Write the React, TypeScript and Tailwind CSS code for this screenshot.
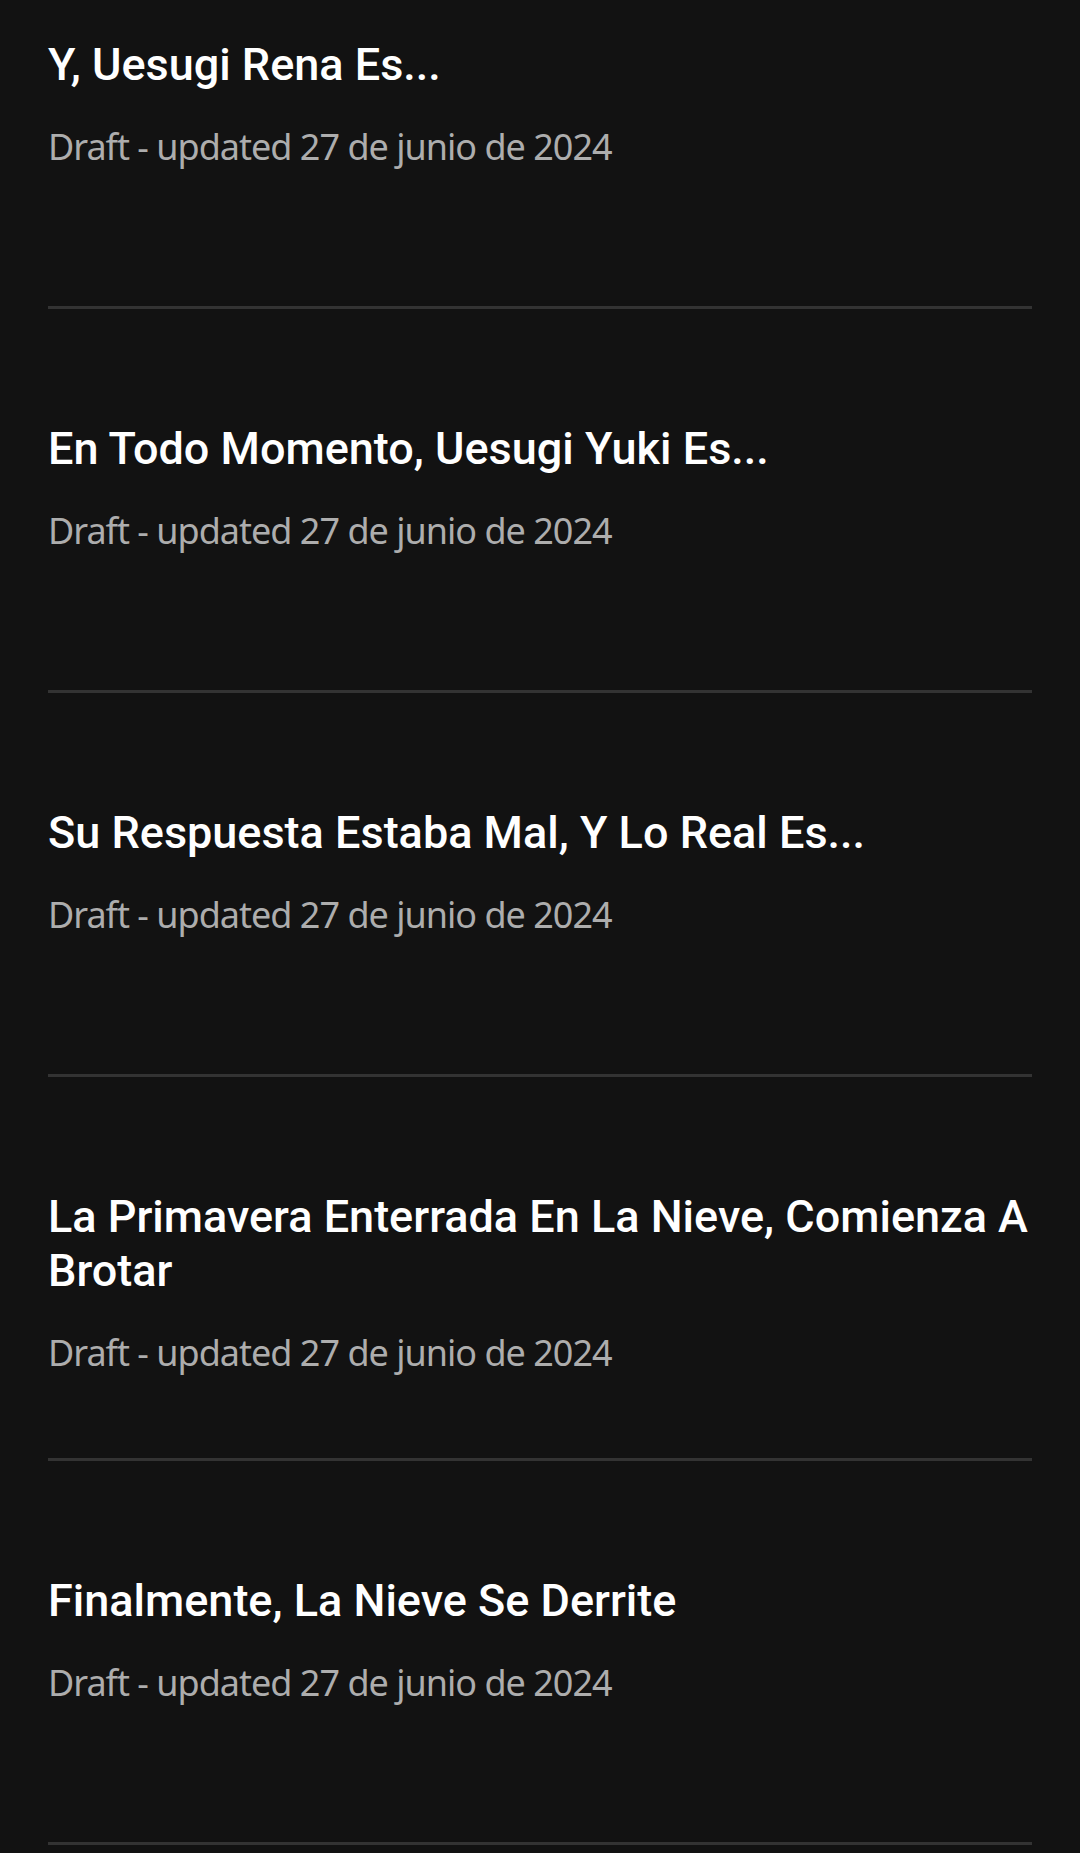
const drafts = [
  'Y, Uesugi Rena Es...',
  'En Todo Momento, Uesugi Yuki Es...',
  'Su Respuesta Estaba Mal, Y Lo Real Es...',
  'La Primavera Enterrada En La Nieve, Comienza A Brotar',
  'Finalmente, La Nieve Se Derrite',
];

function DraftRow({ title }: { title: string }) {
  return (
    <div className="h-[384px] border-b-[3px] border-[#333333] pt-[113px]">
      <h2 className="font-['Roboto',sans-serif] font-medium text-[45px] leading-[54px] text-white">{title}</h2>
      <p className="mt-[31px] font-['Noto_Sans',sans-serif] text-[36px] leading-[48px] tracking-[-1px] text-[#adadad]">
        Draft - updated 27 de junio de 2024
      </p>
    </div>
  );
}

export default function App() {
  return (
    <div className="bg-[#121212] h-[1853px] overflow-hidden">
      <div className="px-[48px] -mt-[75px]">
        {drafts.map((title) => (
          <DraftRow key={title} title={title} />
        ))}
      </div>
    </div>
  );
}
